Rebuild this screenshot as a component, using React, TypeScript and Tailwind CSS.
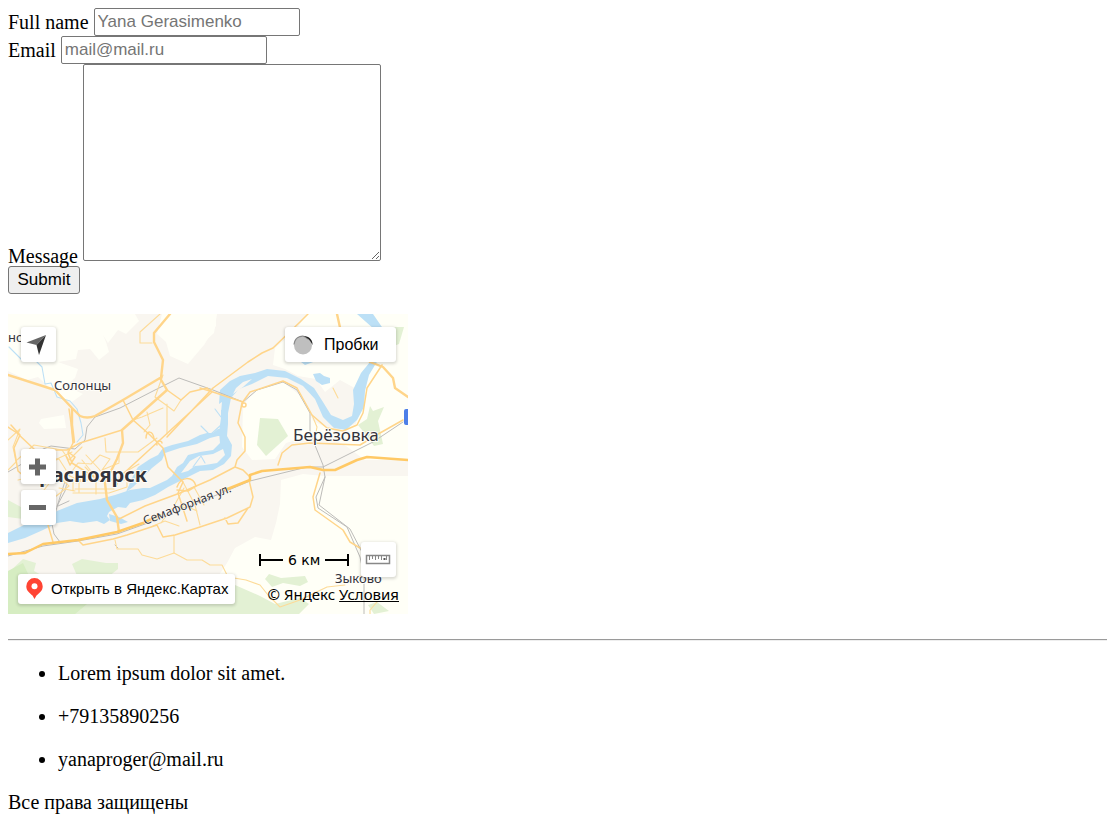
import React from "react";

const mapButton =
  "absolute flex items-center rounded-[3px] bg-white shadow-[0_1px_3px_1px_rgba(0,0,0,0.15)]";

function MapDrawing() {
  return (
    <svg
      viewBox="8 314 400 300"
      className="block h-full w-full"
      role="img"
      aria-label="Красноярск"
      fill="none"
      strokeLinejoin="round"
      strokeLinecap="round"
    >
      <rect x="8" y="314" width="400" height="300" fill="#f9f6f0" />
      {/* open land */}
      <g fill="#fffff7">
        <path d="M8 314H135L139 321L126 334L118 330L108 343L103 335L106 342L109 352L99 360L90 349L78 350L76 359L58 362L78 369L75 378L66 386L83 394L72 402L59 397L38 377L27 380L8 371Z" />
        <path d="M162 314H216V326L204 345L188 364L170 356L166 342L157 334Z" />
        <path d="M201 314H217L214 333L203 343L196 328Z" />
        <path d="M307 314H408V460H365L346 446L326 436L315 444L299 439L286 443L275 459L252 460L242 447L243 405L256 390L283 382L302 397L313 421L335 431L356 424L362 392L340 380L325 392L316 379L298 376L285 369L273 365L275 348L295 331Z" />
        <path d="M281 480L303 474L323 476H408V614H222V598L211 587L227 563L235 548L255 537L271 540L276 523L280 504Z" />
        <path d="M41 419L64 415L66 428L44 429L39 423Z" />
        <path d="M76 614L92 604L114 606L119 614Z" />
      </g>
      {/* parks and forest */}
      <g fill="#e3f1d4">
        <path d="M8 573L23 559L36 563L34 571L47 578H78L72 564L82 559L106 563H118V569L108 577H235V585L260 596L275 604L300 598L309 604L299 614H8Z" />
        <path d="M260 418L278 419L288 436L266 456L257 445Z" />
        <path d="M370 406L373 411L384 407L378 421L383 444L374 446L366 435L358 425L367 419Z" />
        <path d="M391 327H404L399 344L391 347Z" />
        <path d="M8 500L21 507L23 519L8 517ZM269 574L281 578L305 576L308 582L300 586L283 583L272 587L265 579Z" />
        <path d="M368 605L377 602L389 611L374 614Z" />
      </g>
      <path d="M8 571L23 563L30 578L43 591L87 604L75 614H8Z" fill="#d6edc2" />
      {/* river */}
      <g fill="#bce0f6">
        <path d="M357 314H373L384 330L378 360L369 375L365 391L364 407L357 420L346 430L334 428L323 417L315 399L303 386L287 378L268 376L252 384L239 389L231 398L228 413H221L222 402L219 404L220 390L230 381L240 376L255 373L267 369L285 371L301 379L314 388L323 402L331 415L343 420L352 416L354 404L353 390L361 373L370 362L374 329Z" />
        <path d="M221 410H228V424L227 436L232 445L231 456L224 464L213 470L200 471L188 477L180 481L168 487L155 495L143 500L130 503L126 508L118 507L109 512L107 516L110 520L104 524L97 521L83 523L70 521L57 523L43 530L25 538L8 543V533L24 525L43 519L57 511L77 503L100 499L115 495L130 490L143 488H150L167 480L172 476L177 467L183 463L188 455L200 452L213 450L220 443L219 432L221 418Z" />
        <path d="M225 429H218L213 433H207L200 435L188 441L172 445L163 448L158 455L150 459L138 467L135 472L132 478L126 492L133 487L143 477L152 468L162 460L165 453L180 448L197 444L210 438L218 436H226Z" />
        <path d="M313 374L320 373L324 376L330 378V383L322 385L316 381ZM301 362L312 356L316 361L305 365Z" />
        <path d="M109 514L119 517L128 522L121 524L110 521Z" />
      </g>
      <path d="M190 461L199 456L213 454L223 449L225 455L217 463L205 465L195 466L188 471L181 473ZM236 388L243 382L252 379L243 387L233 394Z" fill="#f9f6f0" />
      <g stroke="#bce0f6" strokeWidth="1.1">
        <path d="M9 347L22 360L36 361L42 367L45 384L51 383L57 397L70 401L77 409L81 423L83 435L77 442" />
        <path d="M221 425L210 435L201 426M221 417L215 409M205 463L201 456L193 467" />
      </g>
      {/* railways */}
      <g stroke="#bdbcb9" strokeWidth="1">
        <path d="M8 472L27 461L43 449L51 446L75 449L85 440L87 427L95 417L120 408L155 390L179 378L213 390L243 402L257 390L283 382L297 390L310 413V433L323 465L325 477L316 497L318 508L347 527L360 557L364 575V614" />
        <path d="M403 422L373 442L323 467L307 467L250 481L219 494L145 524L117 534L78 541L43 546L8 556M325 477L319 505L350 529L362 552" />
        <path d="M68 472L60 497L52 524L54 534L60 542M67 482L65 491L57 506M69 501L58 506M115 545L118 548" />
      </g>
      {/* secondary roads */}
      <g stroke="#fddb98" strokeWidth="1.1">
        <path d="M160 314L140 332V343H152M163 375L155 397L166 405L174 411L181 400M167 404V434M147 412L150 425L144 432M105 438L106 452H138L157 438M119 453V462M133 420L142 417L163 408" />
        <path d="M8 440L20 429L13 447L16 462L8 470M17 460L34 445L62 450L69 460L82 447M35 450L48 462L59 458L72 452M38 466L59 459L66 470M24 470L36 460L57 481L70 474L78 463L91 464L100 455L110 459L102 470L119 463M86 455L99 469L106 480M82 460L91 471L76 483M18 480L38 475L52 480L40 495M42 488L55 473L69 486L55 497L45 510" />
        <path d="M73 493H109L127 487V480H73V491M75 489H114M79 480V492M96 479V494M85 467L99 481M117 485L120 475L139 464M68 475L82 482M59 488L75 491M115 540L117 549H138L142 555L157 559L174 553L187 560H202L210 565H222L228 577L246 580L260 585L268 595L280 607L300 600L327 587L345 585" />
        <path d="M174 553V535M153 526L165 521L179 526M161 523L171 509L184 505L197 511M174 506L184 488M183 482L195 505L200 525M194 487L204 505M312 415L317 427L314 443M333 388L338 398M377 602L370 610V614M346 580L360 576L377 577" />
      </g>
      <g stroke="#ffd58a" strokeWidth="1.5">
        <path d="M123 400L133 420L150 435L163 448L168 467L183 482L178 493L187 521M167 390L181 400L190 392L207 388L212 392L135 463L123 474L114 485M308 314L300 322L273 348L262 353L248 362L213 388L167 437M200 388L213 392L243 402" />
        <path d="M8 427L17 433L35 450H67L80 443L122 430M11 425L20 435L14 448L18 471L26 478M69 409L71 423L73 443L68 453L72 463L102 482M146 438C146 430 153 430 154 439M157 445C155 440 162 440 162 443M68 452L75 457L70 465L66 456" />
        <path d="M119 519L145 506L180 493L210 480L235 467L243 470L250 477M235 467L237 460L245 451V437L238 423L242 403L250 392L283 381L297 388L312 415L327 428L343 431L357 425L363 413L367 388L382 365M278 465L282 453L292 445L310 443L360 445L380 433L403 420" />
        <path d="M78 540L83 545L113 539L127 535L157 525L163 537L175 535L200 527L227 518L250 507L253 497L249 480M225 518L228 524L238 523L248 508M320 473L313 497L315 510L343 530L350 542L360 548M48 525L53 542M177 487C181 476 193 476 196 486L188 491L177 490M244 403A2 2 0 1 0 244 407A2 2 0 1 0 244 403" />
      </g>
      {/* main roads */}
      <path
        stroke="#ffd58a"
        strokeWidth="2.4"
        d="M8 375L55 390L72 408L80 416Q87 419 95 416L123 400L160 378L167 390L122 430L123 443L117 459L105 483L107 500L117 517L119 532M170 314L154 333V342L163 360L161 378M72 409V425L74 442M337 314L341 332L370 362L383 367L393 378L395 388L408 397"
      />
      <path
        stroke="#ffc965"
        strokeWidth="2.5"
        d="M8 554L25 553L43 544L78 540L117 532L143 523L160 515M225 490L250 480V475L262 471L310 467L323 470H335L357 460L367 457L408 460"
      />
      {/* place names */}
      <g
        fill="#34343c"
        stroke="#fffef9"
        strokeWidth="2"
        paintOrder="stroke"
        fontFamily="'Noto Sans', 'Open Sans', sans-serif"
      >
        <text x="8" y="342" fontSize="13">но</text>
        <text x="54" y="390" fontSize="13">Солонцы</text>
        <text x="293" y="441" fontSize="17">Берёзовка</text>
        <text x="147" y="482" fontSize="20" fontWeight="700" textAnchor="end">Красноярск</text>
        <text x="335" y="583" fontSize="13">Зыково</text>
        <text x="145" y="525" fontSize="12" strokeWidth="1" transform="rotate(-21 145 525)">Семафорная ул.</text>
      </g>
      <rect x="404" y="409" width="12" height="16" rx="2" fill="#4d7fe8" />
    </svg>
  );
}

function CityMap() {
  return (
    <section className="relative mt-5 h-[300px] w-[400px] max-w-full overflow-hidden font-['Liberation_Sans',Arial,sans-serif] text-black">
      <MapDrawing />
      <button type="button" aria-label="Моё местоположение" className={`${mapButton} left-[13px] top-[13px] size-[35px]`}>
        <svg viewBox="0 0 35 35" className="size-full">
          <path d="M5.500 15.500L25 8L15.500 18Z" fill="#666" />
          <path d="M25 8L18 28L15.500 18Z" fill="#333" />
        </svg>
      </button>
      <button type="button" className={`${mapButton} right-3 top-[13px] h-[35px] w-[111px] gap-[11px] pl-2`}>
        <svg viewBox="0 0 20 20" className="size-5">
          <circle cx="10" cy="10.500" r="9" fill="#bfbfbf" />
          <path d="M1 9.500C2 1 11-1 15 4" fill="none" stroke="#888" strokeWidth="1.300" />
          <path d="M11 1.200C17 1 20 6 19.500 10C17 5 15 3 11 1.200Z" fill="#222" />
        </svg>
        <span className="text-base">Пробки</span>
      </button>
      <button type="button" aria-label="Приблизить" className={`${mapButton} left-[13px] top-[135px] size-[35px]`}>
        <svg viewBox="0 0 35 35" className="size-full">
          <path d="M8 18H25M16.500 9.500V26.500" stroke="#666" strokeWidth="5" />
        </svg>
      </button>
      <button type="button" aria-label="Отдалить" className={`${mapButton} left-[13px] top-[176px] size-[35px]`}>
        <svg viewBox="0 0 35 35" className="size-full">
          <path d="M8 17.500H25" stroke="#666" strokeWidth="5" />
        </svg>
      </button>
      <div className="absolute left-[251px] top-[236px] flex h-5 items-center gap-[5px] font-['DejaVu_Sans',Verdana,sans-serif] text-sm">
        <svg viewBox="0 0 24 12" className="h-3 w-6">
          <path d="M1 0V12M1 6H24" stroke="#000" strokeWidth="2" />
        </svg>
        <span>6 км</span>
        <svg viewBox="0 0 24 12" className="h-3 w-6">
          <path d="M23 0V12M0 6H23" stroke="#000" strokeWidth="2" />
        </svg>
      </div>
      <button type="button" aria-label="Измерить расстояние" className={`${mapButton} bottom-[37px] right-3 size-[35px]`}>
        <svg viewBox="0 0 35 35" className="size-full" fill="none" stroke="#888">
          <path d="M5.500 13.500H28.500V21.500H5.500Z" strokeWidth="1.500" />
          <path d="M8.500 14V18M11.500 14V17M14.500 14V18M17.500 14V17M20.500 14V18M25.500 14V18" />
          <path d="M22.500 17H24.500" stroke="#555" strokeWidth="2" />
        </svg>
      </button>
      <a href="#map" className={`${mapButton} bottom-2.5 left-2.5 h-[30px] w-[217px] gap-2 pb-0.5 pl-2`}>
        <svg viewBox="0 0 17 21" className="h-[21px] w-[17px]">
          <path d="M8.500 0A8.200 8.200 0 0 0 .3 8.200C.3 13 4 15 6.500 17.500L8.500 21L10.500 17.500C13 15 16.700 13 16.700 8.200A8.200 8.200 0 0 0 8.500 0Z" fill="#f43" />
          <circle cx="8.500" cy="8.200" r="3" fill="#fff" />
        </svg>
        <span className="text-[15px]">Открыть в Яндекс.Картах</span>
      </a>
      <div className="absolute bottom-3 right-[9px] flex gap-1 whitespace-nowrap font-['Noto_Sans',sans-serif] text-[15px] leading-4">
        <span>© Яндекс</span>
        <a href="#terms" className="underline">Условия</a>
      </div>
    </section>
  );
}

const fieldStyle =
  "rounded-[2px] border border-[#767676] bg-white font-['Liberation_Sans',Arial,sans-serif] text-[17px] placeholder:text-[#757575]";

export default function App() {
  return (
    <main className="bg-white py-2 pl-2 font-['Liberation_Serif','Times_New_Roman',serif] text-[20px] leading-[23px] text-black">
      <form onSubmit={(event) => event.preventDefault()}>
        <div className="flex h-7 items-center gap-[5px]">
          <label htmlFor="name">Full name</label>
          <input id="name" type="text" placeholder="Yana Gerasimenko" className={`${fieldStyle} h-7 w-[206px] px-[3px]`} />
        </div>
        <div className="flex h-7 items-center gap-[5px]">
          <label htmlFor="email">Email</label>
          <input id="email" type="email" placeholder="mail@mail.ru" className={`${fieldStyle} h-7 w-[206px] px-[3px]`} />
        </div>
        <div className="flex items-end gap-[5px]">
          <label htmlFor="message" className="leading-5">Message</label>
          <textarea id="message" className={`${fieldStyle} mb-[5px] h-[197px] w-[298px] resize p-[3px]`} />
        </div>
        <button type="submit" className="block h-7 w-[72px] rounded-[3px] border border-[#767676] bg-[#efefef] font-['Liberation_Sans',Arial,sans-serif] text-[17px] leading-5">
          Submit
        </button>
      </form>
      <CityMap />
      <footer>
        <hr className="mt-[25px] h-0.5 border-b border-t border-b-[#eee] border-t-[#9a9a9a]" />
        <ul className="mb-5 mt-[21px] flex list-disc flex-col gap-5 pl-[50px]">
          <li>Lorem ipsum dolor sit amet.</li>
          <li>+79135890256</li>
          <li>yanaproger@mail.ru</li>
        </ul>
        <p>Все права защищены</p>
      </footer>
    </main>
  );
}
